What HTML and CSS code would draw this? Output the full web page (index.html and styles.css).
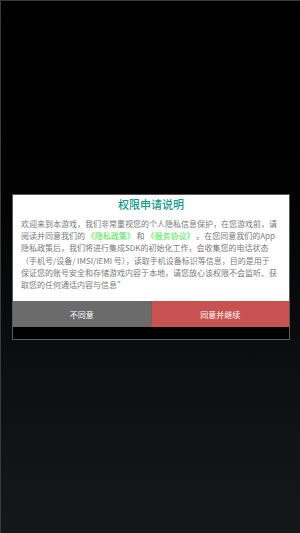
FILE: index.html
```html
<!DOCTYPE html>
<html lang="zh">
<head>
<meta charset="utf-8">
<link rel="stylesheet" href="styles.css">
</head>
<body>
<div class="screen">
  <div class="dialog">
    <div class="title">权限申请说明</div>
    <div class="content">
      <span class="line">欢迎来到本游戏，我们非常重视您的个人隐私信息保护，在您游戏前，请</span>
      <span class="line">阅读并同意我们的 <span class="link">《隐私政策》</span> 和 <span class="link">《服务协议》</span> 。在您同意我们的App</span>
      <span class="line">隐私政策后，我们将进行集成SDK的初始化工作，会收集您的电话状态</span>
      <span class="line">（手机号/设备/ IMSI/IEMI 号），读取手机设备标识等信息，目的是用于</span>
      <span class="line">保证您的账号安全和存储游戏内容于本地，请您放心该权限不会监听、获</span>
      <span class="line">取您的任何通话内容与信息"</span>
    </div>
    <div class="actions">
      <div class="btn btn-decline">不同意</div>
      <div class="btn btn-accept">同意并继续</div>
    </div>
    <div class="footer"></div>
  </div>
</div>
</body>
</html>
```
FILE: styles.css
```css
* { box-sizing: border-box; }
html, body { margin: 0; padding: 0; }
body {
  width: 300px;
  height: 533px;
  overflow: hidden;
  font-family: "Noto Sans CJK SC", "Noto Sans", sans-serif;
}
.screen {
  width: 300px;
  height: 533px;
  background: linear-gradient(to bottom, #000000 0%, #020202 35%, #0d0f10 70%, #151719 100%);
  border-top: 1px solid #3a3a3a;
  border-left: 1px solid #3a3a3a;
  padding-top: 193px;
  padding-left: 11px;
}
.dialog {
  width: 278px;
  border: 1px solid #5a5a5a;
  background: #000;
  display: flex;
  flex-direction: column;
}
.title {
  background: #fff;
  text-align: center;
  color: #0e9c8c;
  font-size: 11px;
  line-height: 16px;
  padding-top: 1px;
  font-weight: 500;
}
.content {
  background: #fff;
  padding: 6px 0 10px 8px;
  font-size: 8px;
  line-height: 12.2px;
  color: #7a7a7a;
}
.line {
  display: block;
  white-space: nowrap;
}
.link { color: #3ee83e; }
.actions {
  display: flex;
  height: 26px;
}
.btn {
  flex: 1;
  display: flex;
  align-items: center;
  justify-content: center;
  color: #fff;
  font-size: 8px;
}
.btn-decline { background: #6b6b6b; }
.btn-accept { background: #c85252; border-left: 1px solid #8a5555; }
.footer {
  height: 12px;
  background: #000;
}
```
